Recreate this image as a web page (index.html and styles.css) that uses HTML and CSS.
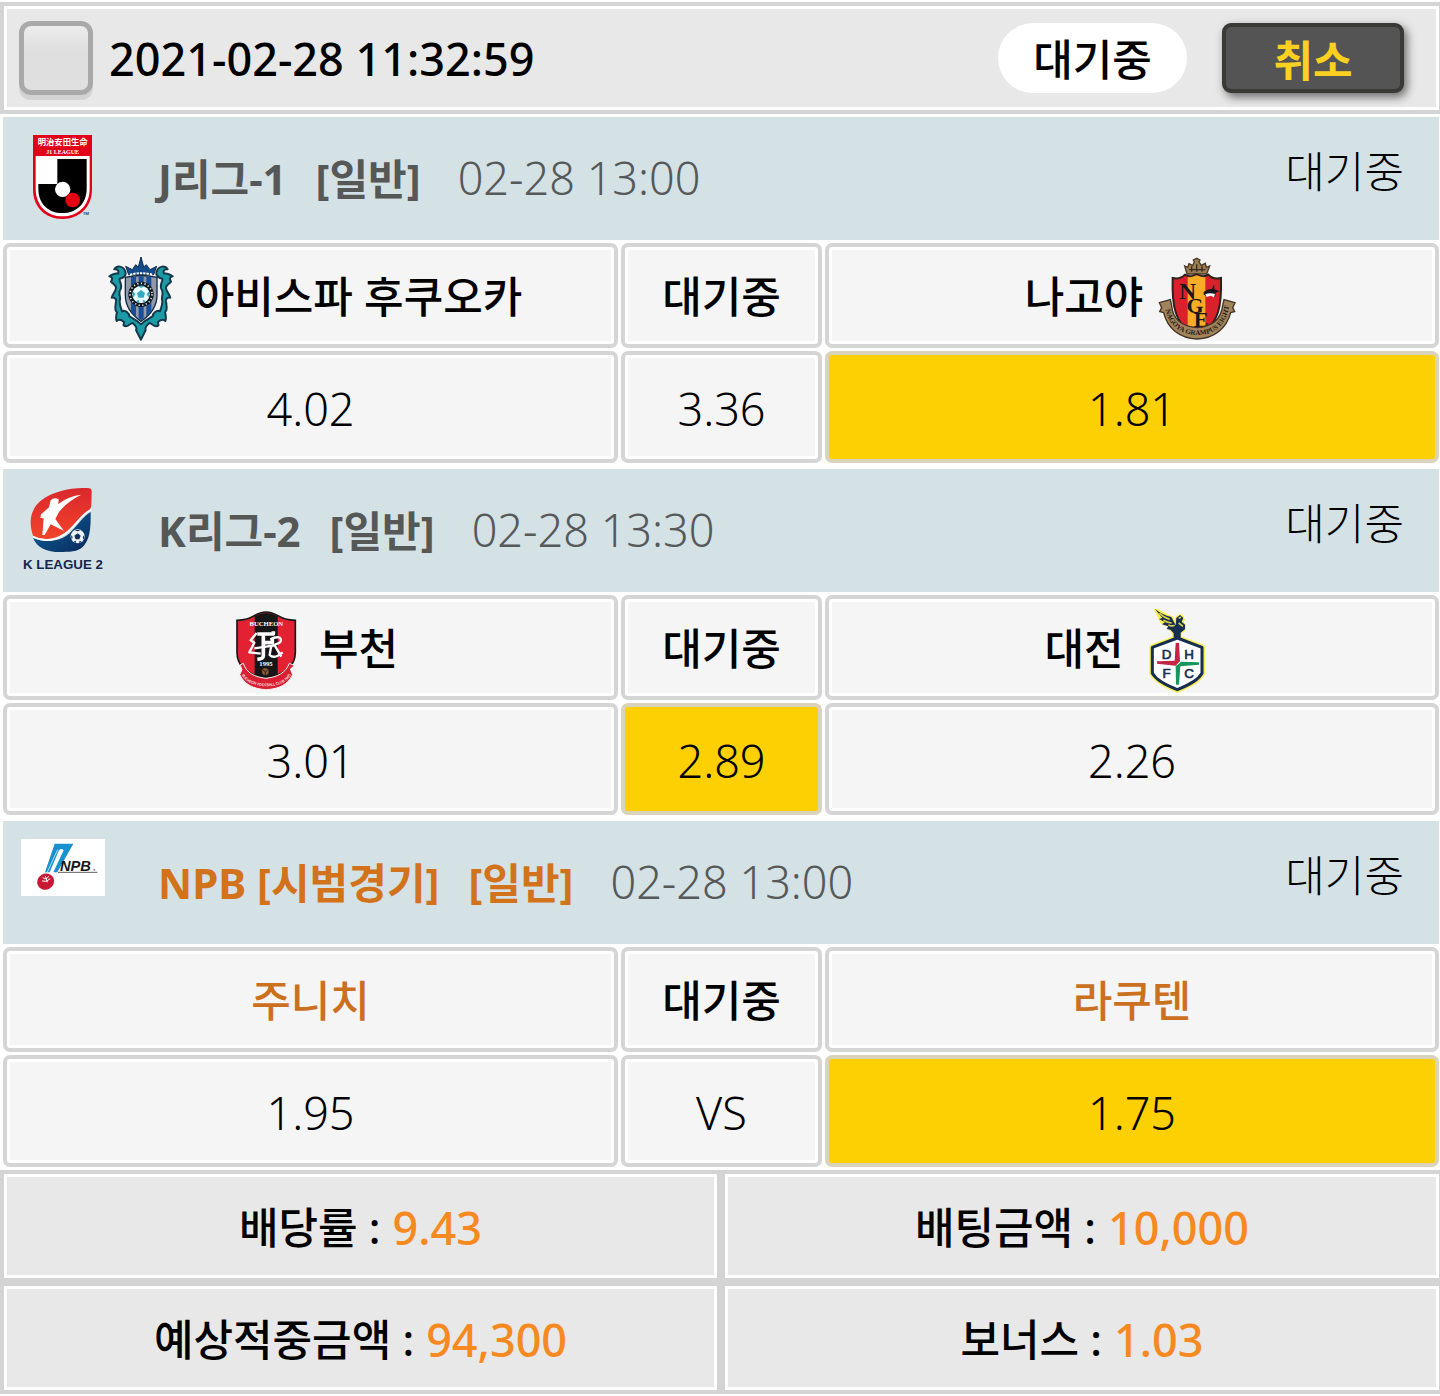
FILE: index.html
```
<!DOCTYPE html>
<html lang="ko">
<head>
  <meta charset="UTF-8" />
  <meta name="viewport" content="width=device-width, initial-scale=1" />
  <title>배팅내역</title>
  <link rel="stylesheet" href="styles.css">
</head>
<body>

  <div class="ticket">
    <div class="ticket-head">
      <input type="checkbox" id="pick">
      <label for="pick">2021-02-28 11:32:59</label>
      <span class="pill">대기중</span>
      <button type="button" class="cancel">취소</button>
    </div>

    <!-- J League -->
    <section class="match">
      <header class="league">
        <svg class="league-logo" viewBox="33 45 252 252">
          <path d="M69 45H246V208C246 262 208 297 157 297S69 262 69 208Z" fill="#e2001a"/>
          <path d="M77 108H239V206C239 256 204 289 157 289S77 256 77 206Z" fill="#fff"/>
          <path d="M142 117H230V206C230 251 199 279 157 279S85 251 85 206V192H142Z" fill="#000"/>
          <circle cx="158" cy="208" r="23" fill="#fff"/>
          <circle cx="188" cy="240" r="22" fill="#e60012"/>
          <text class="cjk" x="158" y="75" font-size="25" fill="#fff" text-anchor="middle">明治安田生命</text>
          <text class="serif" x="158" y="101" font-size="18" fill="#fff" text-anchor="middle">J1 LEAGUE</text>
          <text x="219" y="285" font-size="12" fill="#000">TM</text>
        </svg>
        <h2 class="league-name">J리그-1 <span>[일반]</span></h2>
        <time class="kickoff">02-28 13:00</time>
        <span class="league-status">대기중</span>
      </header>
      <table class="odds">
        <tr>
          <th>
            <div class="team">
              <svg class="team-logo" viewBox="11 38 252 252">
                <g fill="#1a9ba6" stroke="#15384a" stroke-width="6" stroke-linejoin="round">
                  <path d="M90 82C84 64 65 62 57 75C65 73 72 78 68 88C56 84 50 92 42 96C52 98 52 104 47 112C55 121 64 124 62 132C60 142 52 150 49 160C60 158 65 166 61 177C61 190 56 195 65 204C62 214 61 222 64 230C70 224 79 227 86 233C88 239 80 242 88 245C97 250 105 236 112 236C120 243 126 251 122 257L137 286L151 257C148 250 154 243 162 236C169 236 177 250 186 245C194 242 186 239 188 233C195 227 204 224 210 230C213 222 212 214 209 204C218 195 213 190 213 177C209 166 214 158 225 160C222 150 214 142 212 132C210 124 219 121 227 112C222 104 222 98 232 96C224 92 218 84 206 88C202 78 209 73 217 75C209 62 190 64 184 82C180 94 191 102 201 103C203 112 192 120 198 134C207 146 198 155 200 166C204 177 197 190 194 201C184 195 172 208 172 216C163 223 152 224 137 240C122 224 111 223 102 216C102 208 90 195 80 201C77 190 70 177 74 166C76 155 67 146 76 134C82 120 71 112 73 103C83 102 94 94 90 82Z"/>
                </g>
                <path d="M100 91L91 66L111 76L121 61L129 68L137 38L145 68L153 61L164 76L184 66L175 91Z" fill="#124c8b" stroke="#122b48" stroke-width="3"/>
                <path d="M90 99Q137 88 185 99V153C185 191 164 213 137 231C111 213 90 191 90 153Z" fill="#9398a8" stroke="#122b48" stroke-width="4"/>
                <path d="M107 98H122V217L107 202ZM130 96H145V222L137 227L130 222ZM153 97H168V200L153 216Z" fill="#194f99"/>
                <path d="M104 91Q137 82 171 91" fill="none" stroke="#fff" stroke-width="6" stroke-dasharray="7 3"/>
                <circle cx="137" cy="150" r="38" fill="#101820"/>
                <circle cx="137" cy="150" r="33" fill="none" stroke="#d8dde2" stroke-width="5" stroke-dasharray="4 7"/>
                <circle cx="137" cy="150" r="26" fill="#e8ffff"/>
                <path d="M137 137L149 146L145 160H129L125 146ZM128 124H147L137 131ZM112 140L120 149L114 160ZM162 140L154 149L160 160ZM122 171L132 166L130 177ZM152 171L142 166L144 177Z" fill="#35a9be"/>
              </svg>
              <span>아비스파 후쿠오카</span>
            </div>
          </th>
          <th>대기중</th>
          <th>
            <div class="team">
              <span>나고야</span>
              <svg class="team-logo" viewBox="30 38 252 252">
                <path d="M126 89L119 65L128 69L132 58L143 63L148 53L145 47L155 42L165 47L162 53L169 63L181 57L184 69L194 65L185 89Z" fill="#9b7b4f" stroke="#4d3a28" stroke-width="4"/>
                <path d="M132 76H181M140 66V82M155 60V82M171 66V82" stroke="#372b20" stroke-width="4" fill="none"/>
                <path d="M83 101C101 105 112 100 120 91C136 100 145 95 155 90C167 96 178 100 190 91C199 101 211 105 228 101C230 170 227 245 155 273C84 245 81 170 83 101Z" fill="#d9212b" stroke="#2c211d" stroke-width="6"/>
                <path d="M128 98Q143 100 155 93Q169 100 181 98V258L155 270L128 258Z" fill="#f9ad24"/>
                <path d="M176 143Q191 132 200 134L208 120V135L224 141L211 146V158L198 151Q188 157 176 151Z" fill="#18171a"/>
                <path d="M181 149Q197 145 210 149L207 159L197 154L185 158Z" fill="#fff"/>
                <g class="serif" fill="#19171a" text-anchor="middle">
                  <text x="128" y="163" font-size="70">N</text>
                  <text x="150" y="205" font-size="66">G</text>
                  <text x="168" y="247" font-size="66">E</text>
                </g>
                <path d="M43 175L76 166L80 184C83 224 111 247 156 250C201 247 228 224 233 184L237 166L270 175L263 190L269 202L257 205C245 252 208 282 156 284C104 282 67 252 56 205L44 202L50 190Z" fill="#a2845b" stroke="#423225" stroke-width="4"/>
                <path id="ngeRibbon" d="M61 193C69 243 107 272 157 272S244 243 252 187" fill="none"/>
                <text class="serif" font-size="21" fill="#251b17"><textPath href="#ngeRibbon" startOffset="3">NAGOYA GRAMPUS EIGHT</textPath></text>
              </svg>
            </div>
          </th>
        </tr>
        <tr>
          <td>4.02</td>
          <td>3.36</td>
          <td class="selected">1.81</td>
        </tr>
      </table>
    </section>

    <!-- K League -->
    <section class="match">
      <header class="league">
        <svg class="league-logo" viewBox="33 36 252 252">
          <defs>
            <linearGradient id="kRed" x1="0" y1="0" x2="0" y2="1">
              <stop offset="0" stop-color="#d9282d"/>
              <stop offset="1" stop-color="#f24329"/>
            </linearGradient>
            <linearGradient id="kBlue" x1="0" y1="0" x2="1" y2="1">
              <stop offset="0" stop-color="#0c67a5"/>
              <stop offset="1" stop-color="#0a2858"/>
            </linearGradient>
          </defs>
          <path d="M69 188C105 205 147 200 177 176C203 151 223 120 242 111C243 161 239 196 218 216C204 230 177 231 149 231C112 231 80 219 69 188Z" fill="url(#kBlue)"/>
          <path d="M69 182C56 145 59 104 94 76C128 49 188 36 238 40Q245 41 245 48L244 92Q242 104 233 108C212 122 192 152 167 172C138 194 100 198 69 182Z" fill="url(#kRed)"/>
          <path d="M69 185C107 204 146 195 174 170C201 146 218 113 244 104" fill="none" stroke="#fff" stroke-width="5"/>
          <path d="M117 97L122 76Q132 66 146 73L145 88C165 70 190 62 214 59C191 70 167 86 147 111L136 132L162 168L122 148L104 180L97 180L101 130L91 129L93 118Z" fill="#fff"/>
          <circle cx="203" cy="184" r="21" fill="#edf2f7"/>
          <path d="M203 175L212 182L208 193H197L193 182ZM193 165H212L203 169ZM183 180L188 186L185 195ZM223 180L218 186L221 195ZM191 200L197 197L199 205ZM215 200L209 197L207 205Z" fill="#122e5b"/>
          <text class="logo-text logo-bold" x="159" y="282" font-size="40" fill="#12264f" text-anchor="middle">K LEAGUE 2</text>
        </svg>
        <h2 class="league-name">K리그-2 <span>[일반]</span></h2>
        <time class="kickoff">02-28 13:30</time>
        <span class="league-status">대기중</span>
      </header>
      <table class="odds">
        <tr>
          <th>
            <div class="team">
              <svg class="team-logo" viewBox="9 28 252 252">
                <path d="M51 62Q84 61 103 48Q122 37 138 37Q155 37 174 48Q193 61 226 62V158C226 196 203 220 138 239C73 220 51 196 51 158Z" fill="#e22232" stroke="#191719" stroke-width="5"/>
                <path d="M104 50Q122 40 138 40Q155 40 173 50V229L138 237L104 229Z" fill="#171517"/>
                <path d="M60 196L70 191C79 220 104 232 138 236C172 232 197 220 208 191L224 198L211 208L218 225C203 255 177 268 139 270C100 268 74 255 59 225L66 210Z" fill="#d91f31" stroke="#f5f5f5" stroke-width="3"/>
                <text class="serif" x="139" y="79" font-size="20" fill="#fff" text-anchor="middle">BUCHEON</text>
                <g fill="none" stroke="#fff" stroke-linejoin="round">
                  <path d="M112 103H160V95M130 103V168Q130 177 112 179M130 129H157V118" stroke-width="11"/>
                  <path d="M110 100L92 122L103 129L88 158L122 162M151 119C174 107 186 114 182 125C178 135 160 131 153 142L149 166Q162 180 188 158M103 146L164 137L184 171" stroke-width="7"/>
                </g>
                <text class="serif" x="138" y="200" font-size="20" fill="#fff" text-anchor="middle">1995</text>
                <circle cx="136" cy="216" r="10" fill="#8b5c31"/>
                <path d="M129 211L136 217L143 211M136 217V226" stroke="#221b17" stroke-width="3" fill="none"/>
                <path id="bfcRibbon" d="M64 222C80 272 198 272 214 222" fill="none"/>
                <text font-size="11" fill="#fff"><textPath href="#bfcRibbon" startOffset="4">BUCHEON FOOTBALL CLUB 1995</textPath></text>
              </svg>
              <span>부천</span>
            </div>
          </th>
          <th>대기중</th>
          <th>
            <div class="team">
              <span>대전</span>
              <svg class="team-logo" viewBox="15 30 252 252">
                <g stroke="#f7ee54" stroke-width="18" stroke-linejoin="round" fill="#f7ee54">
                  <path d="M139 117L213 145V223Q199 249 139 272Q79 249 64 223V145Z"/>
                  <path d="M73 31L123 56L133 74L138 54L150 49L158 62L152 71L162 78L159 94L149 100L148 114H129L127 101L117 91L110 80L91 69Z" stroke-width="8"/>
                </g>
                <path d="M139 117L213 145V223Q199 249 139 272Q79 249 64 223V145Z" fill="#fff" stroke="#172d52" stroke-width="9" stroke-linejoin="round"/>
                <path d="M71 29Q92 47 121 54L134 79L136 57L147 48L157 57L152 68L162 77V91L149 101L149 116H128V103L118 92L107 90L112 82L93 76L102 70L84 60L94 57Z" fill="#172d52"/>
                <path d="M85 43Q101 57 116 61M97 64Q109 71 122 72M112 78Q123 83 131 79M143 58L150 55M143 72L156 82" stroke="#d9ce47" stroke-width="5" fill="none"/>
                <path d="M134 132H144L147 187L141 193L134 200L78 194V187L131 185Z" fill="#c32645"/>
                <path d="M144 194L150 188L204 190V197L148 202L144 257H135L134 201Z" fill="#15965c"/>
                <g class="logo-text" font-size="40" fill="#172d52" stroke="#172d52" stroke-width="2" text-anchor="middle">
                  <text x="107" y="180">D</text>
                  <text x="174" y="180">H</text>
                  <text x="107" y="237">F</text>
                  <text x="174" y="237">C</text>
                </g>
              </svg>
            </div>
          </th>
        </tr>
        <tr>
          <td>3.01</td>
          <td class="selected">2.89</td>
          <td>2.26</td>
        </tr>
      </table>
    </section>

    <!-- NPB preseason -->
    <section class="match special">
      <header class="league">
        <svg class="league-logo wide" viewBox="33 27 252 171">
          <rect x="33" y="27" width="252" height="171" fill="#fff"/>
          <path d="M134 41H190L142 127H130L161 61Q153 53 146 62L119 127H105Z" fill="#1a91cf"/>
          <path d="M143 59L112 126M153 66L124 126" stroke="#fff" stroke-width="2" fill="none"/>
          <ellipse cx="107" cy="155" rx="26" ry="24" fill="#c71933" transform="rotate(-30 107 155)"/>
          <path d="M98 143Q109 151 116 139M96 153Q109 158 121 146M106 138L112 157" stroke="#fff" stroke-width="3" fill="none"/>
          <text class="logo-text logo-bold logo-italic" x="150" y="122" font-size="44" fill="#191919">NPB</text>
          <path d="M144 127H262" stroke="#5f5f5f" stroke-width="3"/>
          <circle cx="253" cy="119" r="3" fill="#888"/>
        </svg>
        <h2 class="league-name">NPB [시범경기] <span>[일반]</span></h2>
        <time class="kickoff">02-28 13:00</time>
        <span class="league-status">대기중</span>
      </header>
      <table class="odds">
        <tr>
          <th><div class="team"><span>주니치</span></div></th>
          <th>대기중</th>
          <th><div class="team"><span>라쿠텐</span></div></th>
        </tr>
        <tr>
          <td>1.95</td>
          <td>VS</td>
          <td class="selected">1.75</td>
        </tr>
      </table>
    </section>

    <div class="totals">
      <div class="total">배당률 : <b>9.43</b></div>
      <div class="total">배팅금액 : <b>10,000</b></div>
      <div class="total">예상적중금액 : <b>94,300</b></div>
      <div class="total">보너스 : <b>1.03</b></div>
    </div>
  </div>

</body>
</html>
```
FILE: styles.css
```
* {
  box-sizing: border-box;
}

body {
  font-family: 'Noto Sans', 'Noto Sans CJK KR', sans-serif;
  font-size: 43px;
  line-height: 60px;
  font-weight: 500;
  background-color: #fff;
  color: #000;
  margin: 0;
}

.ticket {
  padding: 2px 0;
}

.ticket-head {
  display: flex;
  align-items: center;
  height: 112px;
  padding: 0 35px 0 15px;
  background: #e8e8e8;
  border: 4px solid #d4d4d4;
  border-right-width: 1px;
  box-shadow: inset 0 0 0 3px #fff;
}

.ticket-head input {
  appearance: none;
  flex: none;
  width: 74px;
  height: 74px;
  margin: 0 16px 0 0;
  border: 5px solid #a9a9a9;
  border-radius: 12px;
  background: linear-gradient(#ececec, #dedede 40%, #e0e0e0);
  box-shadow: 0 5px 0 #d3d3d3;
}

.ticket-head input:checked {
  background: #fcd002;
}

.ticket-head label {
  padding-top: 2px;
  font-size: 45px;
}

.pill {
  width: 189px;
  margin-left: auto;
  padding: 7px 0 3px;
  border-radius: 35px;
  background: #fff;
  text-align: center;
}

.cancel {
  width: 182px;
  height: 70px;
  margin-left: 35px;
  padding: 4px 0 0;
  border: 4px solid #393936;
  border-radius: 9px;
  background: #545454;
  box-shadow: 3px 4px 10px rgba(0, 0, 0, 0.55);
  color: #fbd021;
  font: inherit;
  font-weight: 700;
  cursor: pointer;
}

.match {
  margin: 3px 1px 0 3px;
}

.match + .match {
  margin-top: 6px;
}

.league {
  display: flex;
  align-items: flex-start;
  height: 123px;
  padding: 18px 35px 0 18px;
  background: #d4e1e5;
}

.league-logo {
  flex: none;
  width: 84px;
  height: 84px;
  margin-right: 53px;
}

.league-logo.wide {
  height: 57px;
}

.league-name {
  margin: 14px 0 0;
  font-size: 42px;
  font-weight: 700;
  color: #555857;
}

.league-name span {
  margin-left: 18px;
}

.kickoff {
  margin: 13px 0 0 37px;
  font-size: 45px;
  font-weight: 300;
  color: #565959;
}

.league-status {
  margin: 7px 0 0 auto;
  font-weight: 300;
}

.odds,
.odds tbody {
  display: block;
}

.odds tr {
  display: grid;
  grid-template-columns: 615fr 201fr 614fr;
  gap: 3px;
  margin-top: 3px;
}

.odds th,
.odds td {
  display: flex;
  align-items: center;
  justify-content: center;
  padding: 3px 0 0;
  border: 4px solid #d5d5d5;
  border-radius: 7px;
  background: #f5f5f5;
  box-shadow: inset 0 0 0 3px #fff;
}

.odds th {
  height: 105px;
  font-weight: 500;
}

.odds td {
  height: 112px;
  font-size: 45px;
  font-weight: 300;
}

.odds td.selected {
  background: #fcd002;
  border-color: #d8d3ba;
  box-shadow: none;
}

.team {
  display: flex;
  align-items: center;
  gap: 12px;
}

.team-logo {
  width: 84px;
  height: 84px;
  margin-top: 4px;
}

.special .league-name {
  color: #d2721b;
}

.special .team {
  color: #cb701f;
}

.totals {
  display: grid;
  grid-template-columns: 721fr 719fr;
  margin-top: 3px;
}

.total {
  display: flex;
  align-items: center;
  justify-content: center;
  gap: 12px;
  height: 112px;
  padding-top: 3px;
  background: #e8e8e8;
  border: 4px solid #d4d4d4;
  box-shadow: inset 0 0 0 3px #fff;
}

.total:nth-child(even) {
  border-right-width: 1px;
}

.total b {
  font-size: 45px;
  font-weight: 500;
  color: #f6891f;
}

/* lettering inside the club crests */
.cjk {
  font-family: 'Noto Sans CJK JP', sans-serif;
  font-weight: 700;
}

.serif {
  font-family: 'Liberation Serif', serif;
  font-weight: 700;
}

.logo-text {
  font-family: 'Liberation Sans', sans-serif;
}

.logo-bold {
  font-weight: 700;
}

.logo-italic {
  font-style: italic;
}
```
